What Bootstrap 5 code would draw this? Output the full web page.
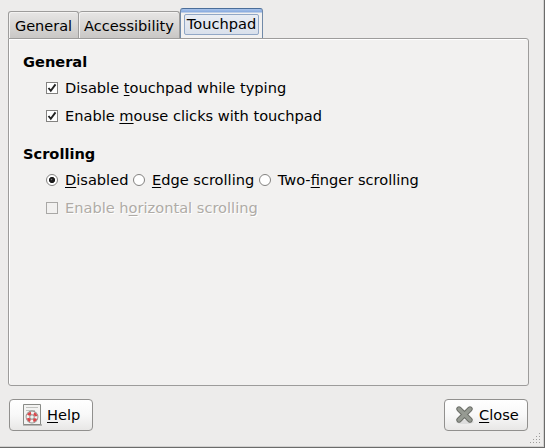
<!DOCTYPE html>
<html lang="en">
<head>
<meta charset="utf-8">
<meta name="viewport" content="width=device-width, initial-scale=1">
<title>Mouse Preferences</title>
<link href="https://cdn.jsdelivr.net/npm/bootstrap@5.3.0/dist/css/bootstrap.min.css" rel="stylesheet">
<style>
body{background:#edeceb;font-family:"DejaVu Sans",sans-serif;font-size:14.6px;line-height:18px;color:#000}
.window{width:545px;height:448px;padding:8px 15px 15px 8px;border-right:1px solid #6b6b6a;border-bottom:1px solid #6b6b6a;box-shadow:inset -1px -1px #d2d1d0}
.nav-tabs.pref-tabs{border:0;height:31px;flex-wrap:nowrap}
.pref-tabs .nav-link{display:flex;justify-content:center;align-items:flex-start;color:#000;border:1px solid #9d9c9b;border-bottom:0;border-radius:3px 3px 0 0;height:27px;padding:5px 0 0;margin:0 0 1px;background:linear-gradient(#e7e6e5,#c9c7c5);box-shadow:inset 1px 1px #f3f2f1;white-space:nowrap;font-size:14.6px;line-height:18px}
.pref-tabs .nav-link:hover{border-color:#9d9c9b}
.pref-tabs .tab-general{width:71px;font-size:14.5px}
.pref-tabs .tab-access{width:101px;border-left-width:0}
.pref-tabs .nav-link.active{color:#000;width:83px;height:31px;margin:0;padding:5px 3px 0;border-color:#4b6e99 #718aa8 #9d9c9b;background:linear-gradient(#a9c4eb 0,#88aade 3px,#f2f1f0 4px);box-shadow:none;z-index:2}
.focus-label{display:block;width:75px;height:21px;border:1px solid #91a7c6;border-radius:2px;background:linear-gradient(#e9edf4,#d9e0eb);line-height:17px;text-align:center}
.pane{width:521px;height:348px;margin-top:-1px;border:1px solid #9d9c9b;border-radius:0 3px 3px;background:#f2f1f0;box-shadow:inset 1px 1px #fff;padding:14px}
.pane h2{font-size:14.6px;font-weight:700;line-height:18px;margin:0}
.pane .heading-next{margin-top:20px}
.options{padding-left:23px;margin-top:8px;display:flex;flex-direction:column;gap:10px}
.option{height:18px;display:flex;align-items:center;white-space:nowrap}
.radio-row{gap:4.5px}
.option .form-check-input{width:12px;height:12px;margin:0 7px 0 0;border:1px solid #838280;background-color:#fff;flex:none}
.option .form-check-input[type=checkbox]{border-radius:0}
.option .form-check-input:checked[type=checkbox]{background-image:url("data:image/svg+xml,%3Csvg xmlns='http://www.w3.org/2000/svg' viewBox='0 0 10 10'%3E%3Cpath d='M1.5 5 3.8 7.8 8.5 1.4' fill='none' stroke='%23222' stroke-width='1.9'/%3E%3C/svg%3E")}
.option .form-check-input:checked[type=radio]{background-image:radial-gradient(circle at 4.5px 4.5px,#777 0,#1b1b1b 1.2px,transparent 1.8px),radial-gradient(circle at 5px 5px,#1b1b1b 2.7px,transparent 3.5px)}
.option .form-check-input:disabled{background:#f2f1f0;border-color:#a9a8a6;opacity:1}
.option .form-check-input:disabled~.form-check-label{opacity:1;color:#afaba6;text-shadow:1px 1px #fff}
.option u,.action u{text-underline-offset:2px;text-decoration-thickness:1px;text-decoration-skip-ink:none}
.actions{margin:13px 1px 0}
.action{width:84px;height:32px;padding:0;border:1px solid #91908e;border-radius:4px;background:linear-gradient(#fff,#f8f8f8 50%,#e8e7e6);color:#000;font-size:14.6px;line-height:18px;display:flex;align-items:center}
.action:hover{color:#000}
.help-icon{margin:0 4px 0 13px}
.close-icon{margin:0 4px 0 10px}
.grip{position:absolute;right:3px;bottom:3px}
</style>
<script src="https://cdn.jsdelivr.net/npm/bootstrap@5.3.0/dist/js/bootstrap.bundle.min.js"></script>
</head>
<body>
<main class="window position-relative d-flex flex-column overflow-hidden">
<ul class="nav nav-tabs pref-tabs align-items-end">
<li class="nav-item"><button class="nav-link tab-general">General</button></li>
<li class="nav-item"><button class="nav-link tab-access">Accessibility</button></li>
<li class="nav-item"><button class="nav-link active"><span class="focus-label">Touchpad</span></button></li>
</ul>
<section class="pane">
<h2>General</h2>
<div class="options">
<div class="option"><input class="form-check-input" type="checkbox" id="typing" checked><label class="form-check-label" for="typing">Disable <u>t</u>ouchpad while typing</label></div>
<div class="option"><input class="form-check-input" type="checkbox" id="clicks" checked><label class="form-check-label" for="clicks">Enable <u>m</u>ouse clicks with touchpad</label></div>
</div>
<h2 class="heading-next">Scrolling</h2>
<div class="options">
<div class="d-flex radio-row">
<div class="option"><input class="form-check-input" type="radio" name="scroll" id="off" checked><label class="form-check-label" for="off"><u>D</u>isabled</label></div>
<div class="option"><input class="form-check-input" type="radio" name="scroll" id="edge"><label class="form-check-label" for="edge"><u>E</u>dge scrolling</label></div>
<div class="option"><input class="form-check-input" type="radio" name="scroll" id="two"><label class="form-check-label" for="two">Two-<u>fi</u>nger scrolling</label></div>
</div>
<div class="option"><input class="form-check-input" type="checkbox" id="horizontal" disabled><label class="form-check-label" for="horizontal">Enable h<u>o</u>rizontal scrolling</label></div>
</div>
</section>
<div class="d-flex justify-content-between actions">
<button class="btn action">
<svg class="help-icon" width="20" height="24" viewBox="0 0 20 24"><path d="M0 22h19" stroke="#b9b8b6" stroke-width="2"/><path d="M.5 1.5h17v20H.5z" fill="#f3f3f2" stroke="#898b87"/><path d="M3 4.5h12M3 7.5h9" stroke="#c1c2bf"/><circle cx="9" cy="14" r="4.1" fill="none" stroke="#8f918c" stroke-width="4.6"/><circle cx="9" cy="14" r="4.1" fill="none" stroke="#f5f3f2" stroke-width="2.8"/><circle cx="9" cy="14" r="4.1" fill="none" stroke="#d9474b" stroke-width="2.8" stroke-dasharray="3.44 3" stroke-dashoffset="-1.5"/></svg><span><u>H</u>elp</span></button>
<button class="btn action">
<svg class="close-icon" width="20" height="20" viewBox="0 0 20 20"><ellipse cx="10" cy="17" rx="9" ry="2" fill="#ddd"/><path d="M4 4l11 11M15 4L4 15" stroke="#6c6f69" stroke-width="5.4" stroke-linecap="round"/><path d="M4 4l11 11M15 4L4 15" stroke="#969a92" stroke-width="3.4" stroke-linecap="round"/></svg><span><u>C</u>lose</span></button>
</div>
<svg class="grip" width="12" height="12" viewBox="0 0 12 12"><path d="M10 1.5h1M7 4.5h1m2 0h1M4 7.5h1m2 0h1m2 0h1M1 10.5h1m2 0h1m2 0h1m2 0h1" stroke="#9d9c9b"/></svg>
</main>
</body>
</html>
